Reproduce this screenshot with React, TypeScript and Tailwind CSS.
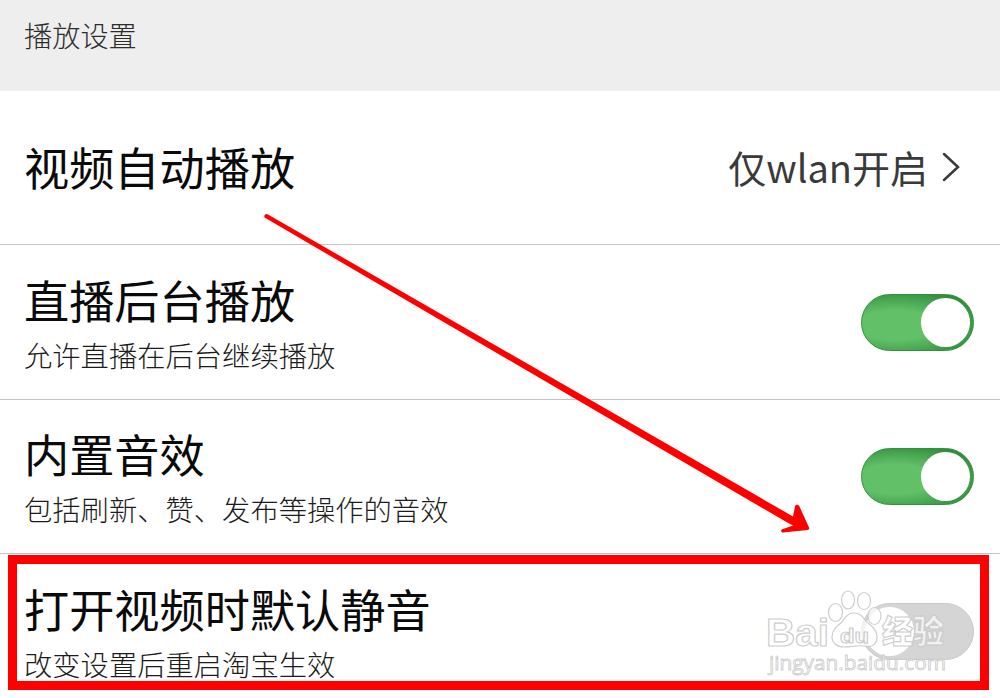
import React from 'react';
import clsx from 'clsx';

interface SettingRowProps {
  title: string;
  description: string;
  enabled: boolean;
  rowClass: string;
}

const Toggle: React.FC<{ enabled: boolean }> = ({ enabled }) => (
  <button
    role="switch"
    aria-checked={enabled}
    className={clsx(
      'flex h-[57px] w-[113px] shrink-0 items-center rounded-full',
      enabled
        ? 'justify-end border border-[#32913a] bg-radial-[at_30%_55%] from-[#62c069] from-35% to-[#1f7a2a] to-100% pr-[3px]'
        : 'justify-start border border-[#c9c9c9] bg-[#d5d5d5] pl-[3px]'
    )}
  >
    <span className="size-[49px] rounded-full bg-white" />
  </button>
);

const SettingRow: React.FC<SettingRowProps> = ({ title, description, enabled, rowClass }) => (
  <div className={clsx('flex items-start justify-between border-[#c4c4c4] pr-[26px] pl-6', rowClass)}>
    <div className="pt-[27px]">
      <h2 className="text-[45.2px] leading-[56px] font-normal text-[#0a0a0a]">{title}</h2>
      <p className="mt-[7px] text-[28.3px] leading-10 font-light text-[#1c1c1c]">{description}</p>
    </div>
    <div className="pt-[49px]">
      <Toggle enabled={enabled} />
    </div>
  </div>
);

// Paw logo with the two lines of outlined lettering
const Watermark: React.FC = () => (
  <svg
    className="absolute top-[585px] left-[762px]"
    width="190"
    height="96"
    viewBox="0 0 190 96"
    fill="#ffffff"
    fillOpacity="0.7"
    stroke="#c8c8c8"
    strokeWidth="1.2"
    strokeOpacity="0.9"
  >
    <ellipse cx="73.5" cy="27.500" rx="7" ry="9" />
    <ellipse cx="86" cy="15" rx="6.5" ry="9" />
    <ellipse cx="102" cy="16" rx="6.500" ry="8.500" />
    <ellipse cx="112.5" cy="31" rx="6.5" ry="8.5" />
    <path d="M92 28c-7 0-9 5-12 9c-5 4-10 8-10 15c0 6 5 10 12 10c7 0 14-2 20-1c8 2 13-2 13-9c0-7-5-11-10-15c-4-4-6-9-13-9z" />
    <text x="4" y="61" fontSize="38" fontWeight="700" fontFamily="Liberation Sans, sans-serif" textLength="63" lengthAdjust="spacingAndGlyphs">
      Bai
    </text>
    <text x="78" y="57.500" fontSize="21" fontWeight="700" fontFamily="Liberation Sans, sans-serif" textLength="29" lengthAdjust="spacingAndGlyphs">
      du
    </text>
    <text x="120" y="58" fontSize="32" fontWeight="900" fontFamily="Noto Sans CJK SC, sans-serif" textLength="62" lengthAdjust="spacingAndGlyphs">
      经验
    </text>
    <text x="7" y="85" fontSize="20" strokeWidth="0.9" fontFamily="Open Sans, sans-serif" textLength="177" lengthAdjust="spacingAndGlyphs">
      jingyan.baidu.com
    </text>
  </svg>
);

const App: React.FC = () => (
  <div className="relative h-[698px] w-[1000px] overflow-hidden bg-white font-['Noto_Sans_CJK_SC',sans-serif]">
    <header className="h-[91px] bg-[#eeeeee] pt-[15px] pl-6 text-[28.2px] leading-10 font-light text-[#2c2c2c]">
      播放设置
    </header>

    <div className="flex h-[154px] items-start justify-between border-b border-[#c4c4c4] pt-[48px] pr-[39px] pl-6">
      <h2 className="text-[45.2px] leading-[56px] text-[#0a0a0a]">视频自动播放</h2>
      <div className="flex items-center gap-[14px] text-[#3a3a3a]">
        <span className="text-[38px] leading-[56px] font-normal">仅wlan开启</span>
        <svg width="19" height="30" viewBox="0 0 19 30" fill="none" stroke="currentColor" strokeWidth="2.5" strokeLinecap="round">
          <path d="M2 2l14 13L2 28" />
        </svg>
      </div>
    </div>

    <SettingRow title="直播后台播放" description="允许直播在后台继续播放" enabled rowClass="h-[155px] border-b" />
    <SettingRow title="内置音效" description="包括刷新、赞、发布等操作的音效" enabled rowClass="-mt-px h-[155px] border-b" />
    <SettingRow title="打开视频时默认静音" description="改变设置后重启淘宝生效" enabled={false} rowClass="h-[144px]" />

    <Watermark />

    {/* Highlight frame and arrow */}
    <div className="absolute top-[555px] left-2 h-[135px] w-[981px] border-[9px] border-[#ff0000]" />
    <svg className="absolute top-0 left-0" width="1000" height="698" viewBox="0 0 1000 698" fill="#ff0000">
      <path d="M268 214.500L793 516.500L795 506.500C795.500 504 798.500 504 799.500 506.500L809 527.500C809.500 529 809 530 807.500 530L783 532.500C780.500 532.500 780.500 529.500 783 529L793 525.500L789 523.500L264.500 217.500C263.500 215 266 213 268 214.500z" />
    </svg>
  </div>
);

export default App;
